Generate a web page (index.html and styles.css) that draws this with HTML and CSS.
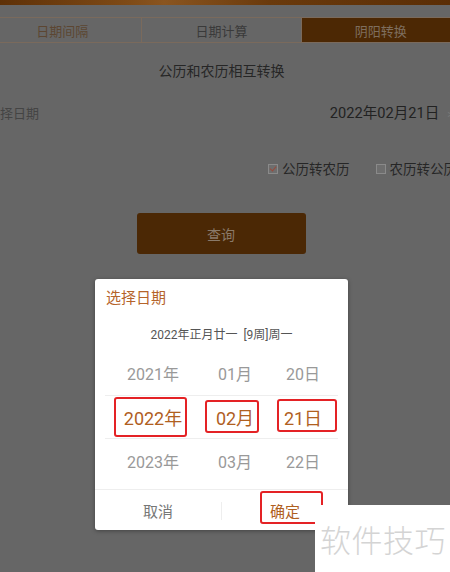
FILE: index.html
```html
<!DOCTYPE html>
<html lang="zh-CN">
<head>
    <meta charset="UTF-8">
    <meta name="viewport" content="width=device-width, initial-scale=1.0">
    <title>阴阳转换</title>
    <link rel="stylesheet" href="styles.css">
</head>
<body>
    <div class="page">
        <div class="topbar"></div>
        <div class="tabs">
            <div class="tab">日期间隔</div>
            <div class="tab tab-mid">日期计算</div>
            <div class="tab tab-active">阴阳转换</div>
        </div>
        <h1 class="title">公历和农历相互转换</h1>
        <div class="date-row">
            <span class="label">选择日期</span>
            <span class="value">2022年02月21日<span class="arrow">&gt;</span></span>
        </div>
        <div class="options">
            <label class="option"><span class="check checked"></span>公历转农历</label>
            <label class="option"><span class="check"></span>农历转公历</label>
        </div>
        <div class="btn-wrap">
            <button class="query">查询</button>
        </div>
    </div>

    <div class="dialog">
        <div class="dialog-title">选择日期</div>
        <div class="dialog-sub">2022年正月廿一&nbsp;&nbsp;[9周]周一</div>
        <div class="wheel">
            <div class="wheel-row">
                <span class="col-year">2021年</span>
                <span class="col-month">01月</span>
                <span class="col-day">20日</span>
            </div>
            <div class="wheel-row selected">
                <span class="col-year">2022年</span>
                <span class="col-month">02月</span>
                <span class="col-day">21日</span>
            </div>
            <div class="wheel-row">
                <span class="col-year">2023年</span>
                <span class="col-month">03月</span>
                <span class="col-day">22日</span>
            </div>
        </div>
        <div class="dialog-actions">
            <button class="action cancel">取消</button>
            <span class="action-sep"></span>
            <button class="action ok">确定</button>
        </div>

        <!-- red marks drawn over the screenshot -->
        <div class="mark mark-year"></div>
        <div class="mark mark-month"></div>
        <div class="mark mark-day"></div>
        <div class="mark mark-ok"></div>
    </div>

    <div class="watermark">软件技巧</div>
</body>
</html>
```

FILE: styles.css
```css
body {
    margin: 0;
    padding: 0;
    width: 450px;
    height: 572px;
    overflow: hidden;
    background-color: #666;
    font-family: Roboto, "Noto Sans CJK SC", sans-serif;
    position: relative;
}

.page {
    width: 477px;
    margin-left: -17px;
}

.topbar {
    height: 5px;
    background: linear-gradient(90deg, #5a2d05 0%, #7e4a16 30%, #8a5520 38%, #6a3a0c 60%, #5a2d05 100%);
}

.tabs {
    display: flex;
    margin-top: 12px;
    height: 26px;
    border-top: 1px solid #7a6a5c;
    border-bottom: 1px solid #7a6a5c;
    box-sizing: border-box;
}

.tab {
    flex: 1;
    display: flex;
    align-items: center;
    justify-content: center;
    font-size: 13px;
    color: #5c4632;
    border-right: 1px solid #7a6a5c;
}

.tab-mid {
    color: #3a3a3a;
}

.tab-active {
    background-color: #4c2804;
    color: #7e6e5e;
    border-right: none;
}

.title {
    margin: 18px 0 0;
    text-align: center;
    font-size: 14px;
    font-weight: normal;
    line-height: 20px;
    color: #262626;
}

.date-row {
    display: flex;
    justify-content: space-between;
    align-items: center;
    margin-top: 22px;
    padding: 0 4px;
    line-height: 20px;
}

.date-row .label {
    font-size: 13px;
    color: #444;
}

.date-row .value {
    font-size: 14.6px;
    color: #222;
    margin-right: 3px;
}

.date-row .arrow {
    margin-left: 8px;
    font-size: 11px;
    color: #7a7a7a;
}

.options {
    display: flex;
    justify-content: flex-end;
    gap: 26px;
    margin-top: 34px;
    padding-right: 3px;
    line-height: 20px;
}

.option {
    display: flex;
    align-items: center;
    font-size: 13.5px;
    color: #262626;
}

.check {
    width: 8px;
    height: 8px;
    border: 1px solid #8a8a8a;
    margin-right: 4px;
    position: relative;
    background-color: #6e6e6e;
}

.check.checked::after {
    content: "";
    position: absolute;
    left: 2px;
    top: 0;
    width: 3px;
    height: 5px;
    border-right: 1.5px solid #9a4a3c;
    border-bottom: 1.5px solid #9a4a3c;
    transform: rotate(40deg);
}

.btn-wrap {
    display: flex;
    justify-content: center;
    margin-top: 34px;
}

.query {
    width: 169px;
    height: 41px;
    margin-left: -1px;
    border: none;
    border-radius: 3px;
    background-color: #4b2805;
    color: #8a7a6a;
    font-family: inherit;
    font-size: 14px;
}

.dialog {
    position: absolute;
    left: 95px;
    top: 279px;
    width: 253px;
    height: 251px;
    background-color: #fff;
    border-radius: 3px;
    box-shadow: 0 1px 4px rgba(0, 0, 0, 0.35);
}

.dialog-title {
    padding: 9px 11px 0;
    font-size: 15px;
    line-height: 20px;
    color: #b5642a;
}

.dialog-sub {
    margin-top: 19px;
    text-align: center;
    font-size: 12px;
    line-height: 16px;
    color: #555;
}

.wheel {
    margin-top: 8px;
    padding: 0 10px;
}

.wheel-row {
    display: flex;
    height: 44px;
    box-sizing: border-box;
    align-items: center;
    font-size: 16px;
    color: #999;
}

.wheel-row.selected {
    border-top: 1px solid #eee;
    border-bottom: 1px solid #eee;
    font-size: 18px;
    color: #b0601f;
}

.col-year {
    width: 96px;
    text-align: center;
}

.col-month {
    width: 68px;
    text-align: center;
}

.col-day {
    width: 68px;
    text-align: center;
}

.dialog-actions {
    display: flex;
    align-items: center;
    margin-top: 6px;
    height: 41px;
    border-top: 1px solid #eee;
}

.action {
    flex: 1;
    height: 100%;
    border: none;
    background: none;
    font-family: inherit;
    font-size: 15px;
}

.cancel {
    color: #777;
}

.ok {
    color: #b0601f;
}

.action-sep {
    width: 1px;
    height: 18px;
    background-color: #eee;
}

.mark {
    position: absolute;
    border: 2.5px solid #e42225;
    border-radius: 3px;
    box-sizing: border-box;
}

.mark-year {
    left: 19px;
    top: 118px;
    width: 73px;
    height: 40px;
}

.mark-month {
    left: 110px;
    top: 121px;
    width: 54px;
    height: 33px;
}

.mark-day {
    left: 182px;
    top: 120px;
    width: 60px;
    height: 33px;
}

.mark-ok {
    left: 165px;
    top: 212px;
    width: 63px;
    height: 33px;
}

.watermark {
    position: absolute;
    left: 315px;
    top: 505px;
    right: 0;
    bottom: 0;
    display: flex;
    align-items: center;
    padding-left: 5px;
    background-color: #fff;
    font-size: 31px;
    font-weight: 300;
    color: #d4d4d4;
    letter-spacing: 0.5px;
}
```
